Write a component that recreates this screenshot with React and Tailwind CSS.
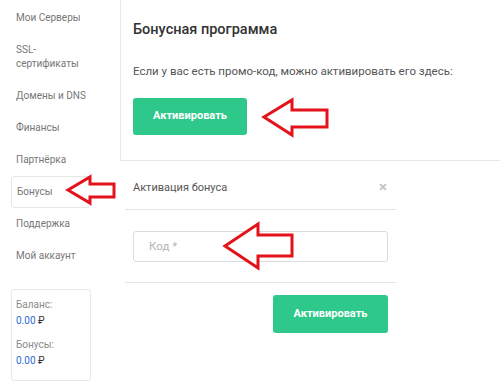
import React from 'react';

const menu = [
    { label: 'Мои Серверы' },
    { label: 'SSL-\nсертификаты', tall: true },
    { label: 'Домены и DNS' },
    { label: 'Финансы' },
    { label: 'Партнёрка' },
    { label: 'Бонусы', active: true },
    { label: 'Поддержка' },
    { label: 'Мой аккаунт' },
];

const Arrow = ({ points, className }) => (
    <svg className={`absolute pointer-events-none ${className}`} width="500" height="390" viewBox="0 0 500 390">
        <polygon points={points} fill="#fff" stroke="#e3121b" strokeWidth="3" strokeLinejoin="miter" />
    </svg>
);

const App = () => {
    return (
        <div className="relative w-[500px] h-[390px] overflow-hidden bg-white flex text-[#555]" style={{ fontFamily: 'Roboto, "Liberation Sans", sans-serif' }}>
            {/* sidebar */}
            <div className="w-[120px] shrink-0 pl-[11px] pt-[2px]">
                {menu.map((m) => (
                    <div
                        key={m.label}
                        className={`w-[80px] flex items-center pl-[5px] text-[10px] leading-[14px] text-[#777] whitespace-pre ${m.tall ? 'h-[46px]' : 'h-[32px]'} ${m.active ? 'h-[31px] border border-[#e6e6e6] rounded-[3px] pl-[4px]' : ''}`}
                    >
                        {m.label}
                    </div>
                ))}
                <div className="mt-[17px] w-[80px] h-[92px] border border-[#e8e8e8] rounded-[3px] pl-[4px] pt-[8px] text-[10px] leading-[14px]">
                    <div className="text-[#8a8a8a]">Баланс:</div>
                    <div className="mt-[2px] text-[#2a6ccf]">0.00 <span className="text-[#333]">₽</span></div>
                    <div className="mt-[10px] text-[#8a8a8a]">Бонусы:</div>
                    <div className="mt-[2px] text-[#2a6ccf]">0.00 <span className="text-[#333]">₽</span></div>
                </div>
            </div>

            {/* main */}
            <div className="flex-1 flex flex-col">
                <div className="-mt-px w-[390px] h-[162px] border border-[#e8e8e8] pl-[12px] pt-[21px]">
                    <div className="text-[14.5px] leading-[18px] font-medium text-[#333]">Бонусная программа</div>
                    <div className="mt-[24px] text-[11.5px] leading-[16px] text-[#555]">Если у вас есть промо-код, можно активировать его здесь:</div>
                    <button className="mt-[19px] w-[114px] h-[37px] rounded-[3px] bg-[#2ec88b] text-white text-[11px] font-bold">Активировать</button>
                </div>

                <div className="ml-[5px] w-[271px]">
                    <div className="h-[49px] flex items-center justify-between pl-[8px] pr-[9px] border-b border-[#e5e5e5]">
                        <span className="text-[11px] text-[#555] pt-[6px]">Активация бонуса</span>
                        <span className="text-[15px] font-bold text-[#c4c4c4] pt-[4px]">×</span>
                    </div>
                    <div className="h-[73px] pt-[21px] pl-[8px] border-b border-[#e5e5e5]">
                        <div className="w-[255px] h-[31px] border border-[#dcdcdc] rounded-[3px] flex items-center pl-[15px] text-[11.5px] text-[#b5b5b5]">Код *</div>
                    </div>
                    <div className="flex justify-end pr-[8px] pt-[12px]">
                        <button className="w-[115px] h-[38px] rounded-[3px] bg-[#2ec88b] text-white text-[11px] font-bold">Активировать</button>
                    </div>
                </div>
            </div>

            <Arrow className="left-0 top-0" points="264,117 292,100 292,110 327,110 327,127 292,127 292,135" />
            <Arrow className="left-0 top-0" points="68,190 90,177 90,184 114,184 114,197 90,197 90,203" />
            <Arrow className="left-0 top-0" points="225,246 258,224 258,235 292,235 292,256 258,256 258,268" />
        </div>
    );
};

export default App;
